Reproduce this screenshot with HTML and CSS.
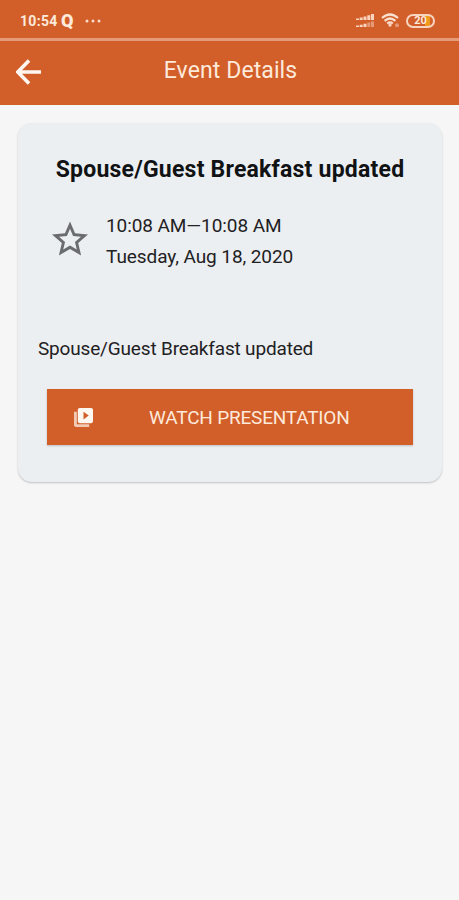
FILE: index.html
```html
<!DOCTYPE html>
<html lang="en">
<head>
    <meta charset="UTF-8">
    <meta name="viewport" content="width=device-width, initial-scale=1.0">
    <title>Event Details</title>
    <link rel="stylesheet" href="styles.css">
</head>
<body>
    <div class="status-bar">
        <span class="clock">10:54</span>
        <span class="app-mark">Q</span>
        <svg class="dots" width="16" height="4" viewBox="0 0 16 4">
            <circle cx="2" cy="2" r="1.5"/>
            <circle cx="8" cy="2" r="1.5"/>
            <circle cx="14" cy="2" r="1.5"/>
        </svg>
        <div class="status-icons">
            <svg class="signal" width="18" height="14" viewBox="0 0 18 14">
                <path d="M0 4.5h3V6H0zM3.7 3.5h3V6h-3zM7.5 2.5h3V6h-3zM11.3 1.3h3V6h-3zM15 0h3v6h-3z"/>
                <path d="M0 11.5h3V13H0zM3.7 10.7h3V13h-3zM7.5 9.7h3V13h-3z"/>
                <path class="weak" d="M11.3 8.5h3V13h-3zM15 7.5h3V13h-3z"/>
            </svg>
            <svg class="wifi" width="19" height="15" viewBox="0 0 19 15">
                <path d="M1 5Q9 -2 17 5M3.6 7.8Q9 3.2 14.4 7.8M6.2 10.5Q9 8.2 11.8 10.5"/>
                <circle cx="9" cy="12" r="1.7"/>
                <circle class="weak" cx="16" cy="12.2" r="2"/>
            </svg>
            <div class="battery"><span>20</span></div>
        </div>
    </div>

    <header class="app-bar">
        <svg class="back" width="26" height="26" viewBox="0 0 26 26">
            <path d="M25 13H2M13 1.5L1.8 13L13 24.5"/>
        </svg>
        <h1>Event Details</h1>
    </header>

    <main class="card">
        <h2>Spouse/Guest Breakfast updated</h2>

        <div class="event-time">
            <svg class="star" width="36" height="35" viewBox="2 2 20 19">
                <path d="M22 9.24l-7.19-.62L12 2 9.19 8.63 2 9.24l5.46 4.73L5.82 21 12 17.27 18.18 21l-1.63-7.03L22 9.24zM12 15.4l-3.76 2.27 1-4.28-3.32-2.88 4.38-.38L12 6.1l1.71 4.04 4.38.38-3.32 2.88 1 4.28L12 15.4z"/>
            </svg>
            <div class="when">
                <p class="hours">10:08 AM&mdash;10:08 AM</p>
                <p class="date">Tuesday, Aug 18, 2020</p>
            </div>
        </div>

        <p class="description">Spouse/Guest Breakfast updated</p>

        <button type="button" class="watch-btn">
            <svg width="19" height="19" viewBox="2 2 20 20">
                <path class="back-page" d="M5 6H2v14c0 1.1.9 2 2 2h14v-3H5V6z"/>
                <path d="M20 2H8c-1.1 0-2 .9-2 2v12c0 1.1.9 2 2 2h12c1.1 0 2-.9 2-2V4c0-1.1-.9-2-2-2zm-8 12v-8l5.5 4-5.5 4z"/>
            </svg>
            <span>WATCH PRESENTATION</span>
        </button>
    </main>
</body>
</html>
```
FILE: styles.css
```css
/* Basic Reset */
* {
    box-sizing: border-box;
    margin: 0;
    padding: 0;
}

body {
    font-family: Roboto, sans-serif;
    min-height: 100vh;
    background-color: #f6f6f6;
    color: #1f2123;
}

/* Phone status bar */
.status-bar {
    display: flex;
    align-items: center;
    height: 41px;
    padding: 3px 24px 0 20px;
    background-color: #d25e2a;
    border-bottom: 3px solid #e59a78;
    color: #fdeadb;
}

.clock {
    width: 38px;
    font-size: 14px;
    font-weight: bold;
    letter-spacing: 0.3px;
}

.app-mark {
    margin-left: 3px;
    width: 14px;
    font-size: 18px;
    font-weight: 900;
}

.dots {
    margin-left: 10px;
    fill: #fbdcc8;
}

.status-icons {
    display: flex;
    align-items: center;
    margin-left: auto;
    fill: #f8d3bd;
}

.signal {
    margin-right: 1px;
}

.weak {
    opacity: 0.5;
}

.wifi {
    margin-left: 6px;
}

.wifi path {
    fill: none;
    stroke: #fbe0cf;
    stroke-width: 2.2;
}

.battery {
    display: flex;
    align-items: center;
    justify-content: center;
    width: 29px;
    height: 14px;
    margin-left: 6px;
    border: 2px solid #f8d3bd;
    border-radius: 7px;
    background: linear-gradient(to right, transparent 70%, #f09a1c 70%, #f09a1c 90%, transparent 90%);
    font-size: 11px;
    font-weight: bold;
}

/* App bar */
.app-bar {
    display: flex;
    align-items: center;
    height: 64px;
    padding: 0 16px;
    background-color: #d25e2a;
}

.back {
    fill: none;
    stroke: #fff8f0;
    stroke-width: 3.6;
    margin-top: -2px;
}

.app-bar h1 {
    flex: 1;
    padding: 0 24px 6px 0;
    color: #fdeadb;
    font-size: 23px;
    font-weight: normal;
    letter-spacing: 0.1px;
    text-align: center;
}

/* Event card */
.card {
    height: 359px;
    margin: 18px 17px 0 18px;
    padding: 32px 20px 0;
    border-radius: 14px;
    background-color: #ebeff2;
    box-shadow: 0 1px 2px rgba(0, 0, 0, 0.22);
}

.card h2 {
    color: #111214;
    font-size: 23px;
    letter-spacing: 0.22px;
    line-height: 30px;
    text-align: center;
    white-space: nowrap;
}

.event-time {
    display: flex;
    align-items: center;
    margin-top: 25px;
    padding-left: 14px;
}

.star {
    margin-top: -5px;
    fill: #6b6c6f;
}

.when {
    margin-left: 18px;
    font-size: 19px;
    letter-spacing: -0.08px;
    line-height: 31px;
}

.description {
    margin-top: 62px;
    font-size: 19px;
    letter-spacing: -0.17px;
    line-height: 30px;
}

.watch-btn {
    display: flex;
    align-items: center;
    width: 366px;
    height: 56px;
    margin: 25px 0 0 9px;
    padding-left: 27px;
    border: none;
    background-color: #d25e2a;
    box-shadow: 0 1px 2px rgba(0, 0, 0, 0.2);
    color: #fdeadb;
    font-family: inherit;
    font-size: 19px;
    letter-spacing: -0.2px;
    cursor: pointer;
}

.watch-btn svg {
    fill: #fff8f0;
}

.back-page {
    opacity: 0.7;
}

.watch-btn span {
    margin-left: 56px;
}
```
